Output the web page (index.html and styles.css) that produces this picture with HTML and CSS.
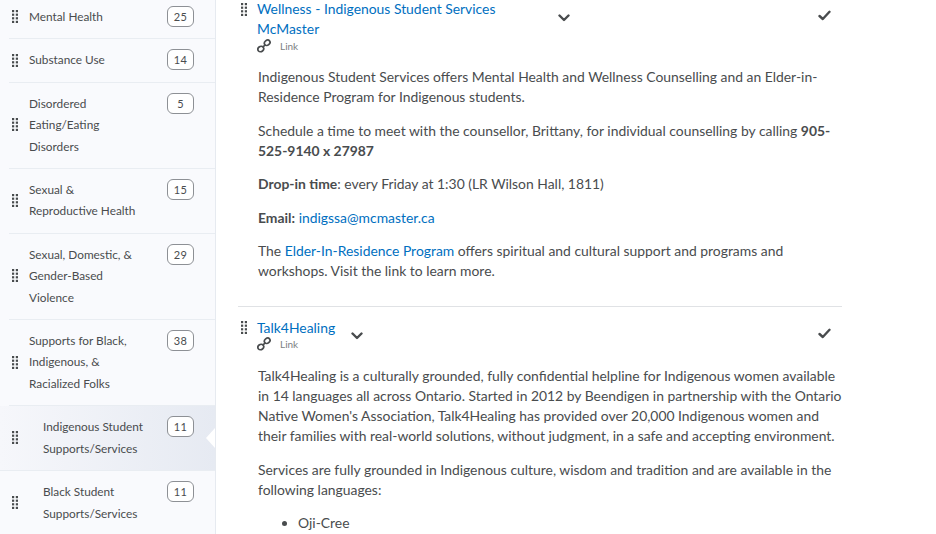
FILE: index.html
```html
<!DOCTYPE html>
<html lang="en">
<head>
  <meta charset="UTF-8" />
  <title>Indigenous Student Supports/Services</title>
  <link rel="stylesheet" href="styles.css">
</head>
<body>
  <svg class="defs" width="0" height="0" aria-hidden="true">
    <symbol id="grip" viewBox="0 0 6 13">
      <rect x="0" y="0" width="2.2" height="2.2"/><rect x="3.8" y="0" width="2.2" height="2.2"/>
      <rect x="0" y="3.6" width="2.2" height="2.2"/><rect x="3.8" y="3.6" width="2.2" height="2.2"/>
      <rect x="0" y="7.2" width="2.2" height="2.2"/><rect x="3.8" y="7.2" width="2.2" height="2.2"/>
      <rect x="0" y="10.8" width="2.2" height="2.2"/><rect x="3.8" y="10.8" width="2.2" height="2.2"/>
    </symbol>
    <symbol id="chevron" viewBox="0 0 12 8">
      <path d="M1.5 1.5 L6 6 L10.5 1.5" fill="none" stroke="#494c4e" stroke-width="2.4" stroke-linecap="round" stroke-linejoin="round"/>
    </symbol>
    <symbol id="check" viewBox="0 0 13 11">
      <path d="M1.5 6 L4.8 9 L11.5 1.8" fill="none" stroke="#494c4e" stroke-width="2.4" stroke-linecap="round" stroke-linejoin="round"/>
    </symbol>
    <symbol id="chain" viewBox="0 0 14 14">
      <g fill="none" stroke="#494c4e" stroke-width="1.7">
        <ellipse cx="3.8" cy="10" rx="3" ry="2.6" transform="rotate(-40 3.8 10)"/>
        <ellipse cx="10.2" cy="3.8" rx="3" ry="2.4" transform="rotate(-40 10.2 3.8)"/>
        <path d="M5.5 8.3 L8.5 5.6"/>
      </g>
    </symbol>
  </svg>

  <div class="page">
    <!-- Module list -->
    <aside class="sidebar">
      <div class="module one-line">
        <svg class="grip"><use href="#grip"/></svg>
        <span class="module-name">Mental Health</span>
        <span class="count">25</span>
      </div>
      <div class="module">
        <svg class="grip"><use href="#grip"/></svg>
        <span class="module-name">Substance Use</span>
        <span class="count">14</span>
      </div>
      <div class="module">
        <svg class="grip"><use href="#grip"/></svg>
        <span class="module-name">Disordered Eating/Eating Disorders</span>
        <span class="count">5</span>
      </div>
      <div class="module">
        <svg class="grip"><use href="#grip"/></svg>
        <span class="module-name">Sexual &amp; Reproductive Health</span>
        <span class="count">15</span>
      </div>
      <div class="module">
        <svg class="grip"><use href="#grip"/></svg>
        <span class="module-name">Sexual, Domestic, &amp; Gender-Based Violence</span>
        <span class="count">29</span>
      </div>
      <div class="module">
        <svg class="grip"><use href="#grip"/></svg>
        <span class="module-name">Supports for Black, Indigenous, &amp; Racialized Folks</span>
        <span class="count">38</span>
      </div>
      <div class="module sub selected">
        <svg class="grip"><use href="#grip"/></svg>
        <span class="module-name">Indigenous Student Supports/Services</span>
        <span class="count">11</span>
      </div>
      <div class="module sub">
        <svg class="grip"><use href="#grip"/></svg>
        <span class="module-name">Black Student Supports/Services</span>
        <span class="count">11</span>
      </div>
    </aside>

    <!-- Topic list -->
    <main class="content">
      <section class="topic">
        <div class="topic-head">
          <svg class="grip topic-grip"><use href="#grip"/></svg>
          <div class="topic-title">
            <a href="#" class="title-link">Wellness - Indigenous Student Services McMaster</a>
            <div class="topic-type"><svg class="chain"><use href="#chain"/></svg>Link</div>
          </div>
          <svg class="chevron wide"><use href="#chevron"/></svg>
          <svg class="check"><use href="#check"/></svg>
        </div>
        <div class="topic-body">
          <p>Indigenous Student Services offers Mental Health and Wellness Counselling and an Elder-in-Residence Program for Indigenous students.</p>
          <p>Schedule a time to meet with the counsellor, Brittany, for individual counselling by calling <b>905-525-9140 x 27987</b></p>
          <p><b>Drop-in time</b>: every Friday at 1:30 (LR Wilson Hall, 1811)</p>
          <p><b>Email:</b> <a href="#">indigssa@mcmaster.ca</a></p>
          <p>The <a href="#">Elder-In-Residence Program</a> offers spiritual and cultural support and programs and workshops. Visit the link to learn more.</p>
        </div>
      </section>

      <section class="topic">
        <div class="topic-head">
          <svg class="grip topic-grip"><use href="#grip"/></svg>
          <div class="topic-title">
            <a href="#" class="title-link">Talk4Healing</a>
            <div class="topic-type"><svg class="chain"><use href="#chain"/></svg>Link</div>
          </div>
          <svg class="chevron"><use href="#chevron"/></svg>
          <svg class="check"><use href="#check"/></svg>
        </div>
        <div class="topic-body">
          <p>Talk4Healing is a culturally grounded, fully confidential helpline for Indigenous women available in 14 languages all across Ontario. Started in 2012 by Beendigen in partnership with the Ontario Native Women's Association, Talk4Healing has provided over 20,000 Indigenous women and their families with real-world solutions, without judgment, in a safe and accepting environment.</p>
          <p>Services are fully grounded in Indigenous culture, wisdom and tradition and are available in the following languages:</p>
          <ul>
            <li>Oji-Cree</li>
          </ul>
        </div>
      </section>
    </main>
  </div>
</body>
</html>
```

FILE: styles.css
```css
html, body {
  margin: 0;
  height: 100%;
  overflow: hidden;
}
body {
  font-family: Lato, "Open Sans", sans-serif;
  background: #fff;
  color: #494c4e;
}
a {
  color: #006fbf;
  text-decoration: none;
}
.defs {
  position: absolute;
}
.page {
  display: flex;
  height: 534px;
  overflow: hidden;
}

/* sidebar */
.sidebar {
  width: 215px;
  flex: none;
  background: #f9fafd;
  border-right: 1px solid #e6eaf0;
  margin-top: -4px;
  height: 560px;
}
.module {
  display: flex;
  align-items: flex-start;
  margin-left: 9px;
  padding: 10px 21px 11px 0;
  border-bottom: 1px solid #e9edf2;
  font-size: 11.8px;
  line-height: 21.4px;
  position: relative;
}
.module .grip {
  width: 6px;
  height: 13px;
  flex: none;
  align-self: center;
  margin-right: 14px;
  margin-left: 3px;
  fill: #494c4e;
}
.module-name {
  flex: 1;
  min-width: 0;
  margin-left: -3px;
  padding-right: 30px;
}
.count {
  flex: none;
  box-sizing: border-box;
  width: 27px;
  height: 21px;
  border: 1px solid #8d9095;
  border-radius: 6px;
  font-size: 11px;
  line-height: 19px;
  text-align: center;
  background: #fff;
  letter-spacing: 0.3px;
}
.sub .module-name {
  padding-left: 14px;
  padding-right: 16px;
}
.selected {
  margin-left: 0;
  padding-left: 9px;
  background: linear-gradient(to right, #f6f7fb, #e6eaf2);
}
.selected::after {
  content: "";
  position: absolute;
  right: 0;
  top: 22px;
  border-top: 10px solid transparent;
  border-bottom: 10px solid transparent;
  border-right: 9px solid #fff;
}

/* topics */
.content {
  width: 604px;
  margin-left: 22px;
  flex: none;
}
.topic {
  border-bottom: 1px solid #e0e2e5;
  padding-bottom: 25px;
}
.topic + .topic {
  padding-top: 11px;
  border-bottom: none;
}
.topic:first-child .topic-title {
  margin-top: -1px;
}
.topic:first-child .topic-body {
  padding-top: 1px;
}
.topic + .topic .topic-type {
  margin-top: -1px;
}
.topic + .topic .topic-body {
  padding-top: 2px;
}
.topic-head {
  display: flex;
  align-items: flex-start;
  position: relative;
}
.topic-grip {
  width: 6px;
  height: 13px;
  flex: none;
  fill: #494c4e;
  margin: 3px 10px 0 3px;
}
.topic-title {
  max-width: 284px;
  font-size: 13.9px;
  line-height: 20px;
}
.chevron {
  width: 12px;
  height: 8px;
  flex: none;
  margin: 14px 0 0 16px;
}
.chevron.wide {
  margin-left: 17px;
}
.check {
  width: 13px;
  height: 11px;
  position: absolute;
  left: 580px;
  top: 10px;
}
.topic-type {
  display: flex;
  align-items: center;
  font-size: 10px;
  line-height: 14px;
  color: #7c7f82;
}
.chain {
  width: 14px;
  height: 14px;
  margin-right: 9px;
}
.topic-body {
  padding: 0 0 0 20px;
  font-size: 13.9px;
  line-height: 20px;
}
.topic-body p {
  margin: 13.4px 0;
}
.topic-body p:last-child {
  margin-bottom: 0;
}
.topic-body ul {
  margin: 13.4px 0 0;
  padding-left: 40px;
}
```
